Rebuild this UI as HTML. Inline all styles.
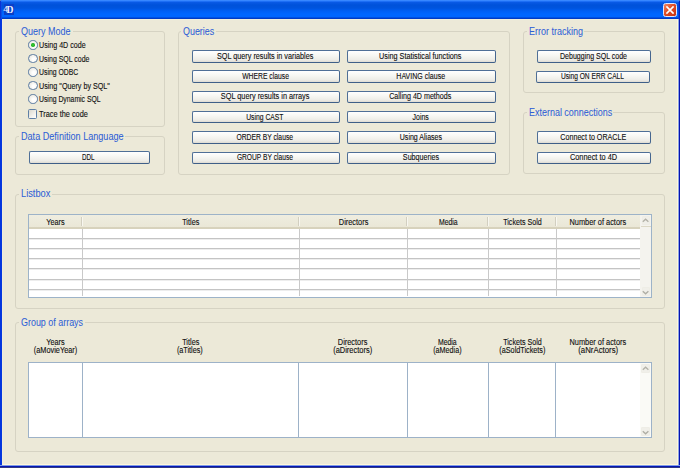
<!DOCTYPE html><html><head><meta charset="utf-8"><style>
*{box-sizing:border-box;margin:0;padding:0}
html,body{width:680px;height:468px;overflow:hidden;background:#A0977F}
body{position:relative;font-family:"Liberation Sans", sans-serif;color:#101010}
.a{position:absolute}
.t{position:absolute;white-space:nowrap;-webkit-text-stroke:0.12px currentColor}
#frame{position:absolute;left:0;top:0;width:680px;height:468px;background:linear-gradient(90deg,#0434DC 0,#0538E0 2px,#8FA6E4 2px,#8FA6E4 678px,#8FA6E4 678px,#8FA6E4 679px,#0612B0 679px);border-radius:2px 2px 0 0}
#bot{position:absolute;left:0;top:465px;width:680px;height:3px;background:linear-gradient(#7E9CEA 0,#7E9CEA 1px,#0616B4 1px,#0616B4 2px,#303A82 2px)}
#title{position:absolute;left:0;top:0;width:680px;height:19px;border-radius:2px 2px 0 0;
 background:linear-gradient(#4592FF 0px,#2A7CFF 1px,#0A5AE6 2.2px,#0052DA 5px,#0054DE 8px,#005FF4 11px,#0066FF 14px,#0066FF 16.5px,#0046D4 18px,#0030B8 19px)}
#client{position:absolute;left:2px;top:19px;width:676px;height:446px;background:#ECE9D8;border-top:1px solid #F1EEDB;border-left:1px solid #F1EDDA;border-right:1px solid #FFF6DA;border-bottom:1px solid #FFF6DA}
.g{position:absolute;border:1px solid #D6D3C3;border-radius:3px}
.gb{position:absolute;background:#ECE9D8}
.b{position:absolute;border:1.2px solid #4F6F97;border-bottom-color:#3F5F88;border-right-color:#46668F;border-radius:2px;background:linear-gradient(#FFFFFF,#F7F7F3 40%,#EDECE7 80%,#DEDBD2)}
.r{position:absolute;width:9.4px;height:9.4px;border-radius:50%;border:1.4px solid #5A7BA3;background:radial-gradient(circle at 60% 60%,#FFFFFF 20%,#ECEBE5 70%,#D6D4CB)}
</style></head><body>
<div id="frame"></div><div id="bot"></div><div id="title"></div>
<div class="a" style="left:0;top:1px;width:1px;height:18px;background:#0A34D4"></div><div class="a" style="left:1px;top:2px;width:1px;height:17px;background:#0A4EE6"></div><div class="a" style="left:678px;top:2px;width:1px;height:17px;background:#0648D8"></div><div class="a" style="left:679px;top:1px;width:1px;height:18px;background:#0226C0"></div>
<div class="a" style="left:3.5px;top:4px;width:10.5px;height:10.7px;background:#0A40C8"></div>
<div class="a" style="left:6.4px;top:5.3px;font-family:'Liberation Serif',serif;font-weight:bold;font-size:9.6px;line-height:9.6px;color:#F2F4FF">D</div>
<div class="a" style="left:3.2px;top:5.4px;font-family:'Liberation Sans',sans-serif;font-weight:normal;font-size:8.5px;line-height:8.5px;color:#E8ECFF">4</div>
<div class="a" style="left:662.8px;top:3px;width:14px;height:14px;border-radius:2.5px;border:1px solid #DDE6FF;background:linear-gradient(135deg,#F08A68,#E3522A 40%,#D03C16 80%,#C23410)"></div>
<svg class="a" style="left:662.8px;top:3px" width="14" height="14"><path d="M3.4 3.4L10.6 10.6M10.6 3.4L3.4 10.6" stroke="#fff" stroke-width="1.6"/></svg>
<div id="client"></div>
<div class="g" style="left:15px;top:31px;width:150px;height:96px"></div>
<div class="gb" style="left:19.2px;top:30px;width:53.4px;height:3px"></div>
<div class="t" style="left:21.20px;top:26.64px;font-size:10px;line-height:10px;color:#2F5FD6;transform:scaleX(0.898);transform-origin:0 0;-webkit-text-stroke:0.05px #2F5FD6;">Query Mode</div>
<div class="g" style="left:15px;top:136px;width:150px;height:39px"></div>
<div class="gb" style="left:19px;top:135px;width:105.8px;height:3px"></div>
<div class="t" style="left:21.00px;top:131.63px;font-size:10px;line-height:10px;color:#2F5FD6;transform:scaleX(0.909);transform-origin:0 0;-webkit-text-stroke:0.05px #2F5FD6;">Data Definition Language</div>
<div class="g" style="left:178px;top:31px;width:332px;height:144px"></div>
<div class="gb" style="left:181.2px;top:30px;width:35.2px;height:3px"></div>
<div class="t" style="left:183.20px;top:26.64px;font-size:10px;line-height:10px;color:#2F5FD6;transform:scaleX(0.891);transform-origin:0 0;-webkit-text-stroke:0.05px #2F5FD6;">Queries</div>
<div class="g" style="left:523px;top:31px;width:142px;height:62px"></div>
<div class="gb" style="left:526.5px;top:30px;width:57px;height:3px"></div>
<div class="t" style="left:528.50px;top:26.64px;font-size:10px;line-height:10px;color:#2F5FD6;transform:scaleX(0.898);transform-origin:0 0;-webkit-text-stroke:0.05px #2F5FD6;">Error tracking</div>
<div class="g" style="left:523px;top:112px;width:142px;height:62px"></div>
<div class="gb" style="left:526.5px;top:111px;width:86.8px;height:3px"></div>
<div class="t" style="left:528.50px;top:108.13px;font-size:10px;line-height:10px;color:#2F5FD6;transform:scaleX(0.896);transform-origin:0 0;-webkit-text-stroke:0.05px #2F5FD6;">External connections</div>
<div class="g" style="left:15px;top:194px;width:650px;height:115px"></div>
<div class="gb" style="left:19px;top:193px;width:32.7px;height:3px"></div>
<div class="t" style="left:21.00px;top:189.13px;font-size:10px;line-height:10px;color:#2F5FD6;transform:scaleX(0.926);transform-origin:0 0;-webkit-text-stroke:0.05px #2F5FD6;">Listbox</div>
<div class="g" style="left:15px;top:322px;width:650px;height:130px"></div>
<div class="gb" style="left:19.2px;top:321px;width:65.6px;height:3px"></div>
<div class="t" style="left:21.20px;top:317.64px;font-size:10px;line-height:10px;color:#2F5FD6;transform:scaleX(0.893);transform-origin:0 0;-webkit-text-stroke:0.05px #2F5FD6;">Group of arrays</div>
<div class="r" style="left:28.2px;top:40.3px"></div>
<div class="a" style="left:31.2px;top:43.3px;width:3.4px;height:3.4px;border-radius:50%;background:radial-gradient(circle,#30C030 40%,#1E951E)"></div>
<div class="t" style="left:39.00px;top:41.47px;font-size:8.3px;line-height:8.3px;transform:scaleX(0.856);transform-origin:0 0;">Using 4D code</div>
<div class="r" style="left:28.2px;top:53.8px"></div>
<div class="t" style="left:39.00px;top:54.97px;font-size:8.3px;line-height:8.3px;transform:scaleX(0.838);transform-origin:0 0;">Using SQL code</div>
<div class="r" style="left:28.2px;top:67.3px"></div>
<div class="t" style="left:39.00px;top:68.47px;font-size:8.3px;line-height:8.3px;transform:scaleX(0.826);transform-origin:0 0;">Using ODBC</div>
<div class="r" style="left:28.2px;top:80.8px"></div>
<div class="t" style="left:39.00px;top:81.97px;font-size:8.3px;line-height:8.3px;transform:scaleX(0.865);transform-origin:0 0;">Using "Query by SQL"</div>
<div class="r" style="left:28.2px;top:94.3px"></div>
<div class="t" style="left:39.00px;top:95.47px;font-size:8.3px;line-height:8.3px;transform:scaleX(0.825);transform-origin:0 0;">Using Dynamic SQL</div>
<div class="a" style="left:28px;top:109px;width:9.3px;height:9.7px;border:1.3px solid #5F80A6;border-radius:1.5px;background:linear-gradient(135deg,#DAD8CE,#F2F1EC 60%,#FFFFFF)"></div>
<div class="t" style="left:39.00px;top:110.47px;font-size:8.3px;line-height:8.3px;transform:scaleX(0.889);transform-origin:0 0;">Trace the code</div>
<div class="b" style="left:28.7px;top:151px;width:120.99999999999999px;height:12.6px"></div>
<div class="t" style="left:27.90px;top:152.67px;width:121.00px;text-align:center;font-size:8.3px;line-height:8.3px;"><span style="display:inline-block;transform:scaleX(0.759)">DDL</span></div>
<div class="b" style="left:192px;top:50.0px;width:147.8px;height:12.6px"></div>
<div class="t" style="left:191.20px;top:51.67px;width:147.80px;text-align:center;font-size:8.3px;line-height:8.3px;"><span style="display:inline-block;transform:scaleX(0.873)">SQL query results in variables</span></div>
<div class="b" style="left:347.2px;top:50.0px;width:148.60000000000002px;height:12.6px"></div>
<div class="t" style="left:346.40px;top:51.67px;width:148.60px;text-align:center;font-size:8.3px;line-height:8.3px;"><span style="display:inline-block;transform:scaleX(0.872)">Using Statistical functions</span></div>
<div class="b" style="left:192px;top:70.3px;width:147.8px;height:12.6px"></div>
<div class="t" style="left:191.20px;top:71.97px;width:147.80px;text-align:center;font-size:8.3px;line-height:8.3px;"><span style="display:inline-block;transform:scaleX(0.818)">WHERE clause</span></div>
<div class="b" style="left:347.2px;top:70.3px;width:148.60000000000002px;height:12.6px"></div>
<div class="t" style="left:346.40px;top:71.97px;width:148.60px;text-align:center;font-size:8.3px;line-height:8.3px;"><span style="display:inline-block;transform:scaleX(0.849)">HAVING clause</span></div>
<div class="b" style="left:192px;top:90.6px;width:147.8px;height:12.6px"></div>
<div class="t" style="left:191.20px;top:92.27px;width:147.80px;text-align:center;font-size:8.3px;line-height:8.3px;"><span style="display:inline-block;transform:scaleX(0.884)">SQL query results in arrays</span></div>
<div class="b" style="left:347.2px;top:90.6px;width:148.60000000000002px;height:12.6px"></div>
<div class="t" style="left:346.40px;top:92.27px;width:148.60px;text-align:center;font-size:8.3px;line-height:8.3px;"><span style="display:inline-block;transform:scaleX(0.858)">Calling 4D methods</span></div>
<div class="b" style="left:192px;top:110.9px;width:147.8px;height:12.6px"></div>
<div class="t" style="left:191.20px;top:112.57px;width:147.80px;text-align:center;font-size:8.3px;line-height:8.3px;"><span style="display:inline-block;transform:scaleX(0.815)">Using CAST</span></div>
<div class="b" style="left:347.2px;top:110.9px;width:148.60000000000002px;height:12.6px"></div>
<div class="t" style="left:346.40px;top:112.57px;width:148.60px;text-align:center;font-size:8.3px;line-height:8.3px;"><span style="display:inline-block;transform:scaleX(0.837)">Joins</span></div>
<div class="b" style="left:192px;top:131.2px;width:147.8px;height:12.6px"></div>
<div class="t" style="left:191.20px;top:132.87px;width:147.80px;text-align:center;font-size:8.3px;line-height:8.3px;"><span style="display:inline-block;transform:scaleX(0.814)">ORDER BY clause</span></div>
<div class="b" style="left:347.2px;top:131.2px;width:148.60000000000002px;height:12.6px"></div>
<div class="t" style="left:346.40px;top:132.87px;width:148.60px;text-align:center;font-size:8.3px;line-height:8.3px;"><span style="display:inline-block;transform:scaleX(0.848)">Using Aliases</span></div>
<div class="b" style="left:192px;top:151.5px;width:147.8px;height:12.6px"></div>
<div class="t" style="left:191.20px;top:153.17px;width:147.80px;text-align:center;font-size:8.3px;line-height:8.3px;"><span style="display:inline-block;transform:scaleX(0.803)">GROUP BY clause</span></div>
<div class="b" style="left:347.2px;top:151.5px;width:148.60000000000002px;height:12.6px"></div>
<div class="t" style="left:346.40px;top:153.17px;width:148.60px;text-align:center;font-size:8.3px;line-height:8.3px;"><span style="display:inline-block;transform:scaleX(0.864)">Subqueries</span></div>
<div class="b" style="left:537.4px;top:50px;width:113.20000000000005px;height:12.6px"></div>
<div class="t" style="left:536.60px;top:51.67px;width:113.20px;text-align:center;font-size:8.3px;line-height:8.3px;"><span style="display:inline-block;transform:scaleX(0.847)">Debugging SQL code</span></div>
<div class="b" style="left:536.4px;top:70.5px;width:113.80000000000007px;height:12.6px"></div>
<div class="t" style="left:535.60px;top:72.17px;width:113.80px;text-align:center;font-size:8.3px;line-height:8.3px;"><span style="display:inline-block;transform:scaleX(0.8)">Using ON ERR CALL</span></div>
<div class="b" style="left:537.4px;top:131px;width:113.20000000000005px;height:12.6px"></div>
<div class="t" style="left:536.60px;top:132.67px;width:113.20px;text-align:center;font-size:8.3px;line-height:8.3px;"><span style="display:inline-block;transform:scaleX(0.861)">Connect to ORACLE</span></div>
<div class="b" style="left:537.4px;top:151.5px;width:113.20000000000005px;height:12.6px"></div>
<div class="t" style="left:536.60px;top:153.17px;width:113.20px;text-align:center;font-size:8.3px;line-height:8.3px;"><span style="display:inline-block;transform:scaleX(0.889)">Connect to 4D</span></div>
<div class="a" style="left:28px;top:214px;width:624px;height:83.5px;background:#fff;border:1px solid #9DB3C8;box-shadow:inset 0 1px 0 #C6D2DC,inset -1px 0 0 #C6D2DC"></div>
<div class="a" style="left:29px;top:215.3px;width:611px;height:13.299999999999994px;background:linear-gradient(#EFEDE0,#EAE7D7);border-bottom:2px solid #D7D2BC"></div>
<div class="t" style="left:28.00px;top:217.87px;width:54.80px;text-align:center;font-size:8.3px;line-height:8.3px;"><span style="display:inline-block;transform:scaleX(0.881)">Years</span></div>
<div class="t" style="left:82.80px;top:217.87px;width:216.40px;text-align:center;font-size:8.3px;line-height:8.3px;"><span style="display:inline-block;transform:scaleX(0.879)">Titles</span></div>
<div class="t" style="left:299.20px;top:217.87px;width:108.20px;text-align:center;font-size:8.3px;line-height:8.3px;"><span style="display:inline-block;transform:scaleX(0.891)">Directors</span></div>
<div class="t" style="left:407.40px;top:217.87px;width:81.40px;text-align:center;font-size:8.3px;line-height:8.3px;"><span style="display:inline-block;transform:scaleX(0.83)">Media</span></div>
<div class="t" style="left:488.80px;top:217.87px;width:67.60px;text-align:center;font-size:8.3px;line-height:8.3px;"><span style="display:inline-block;transform:scaleX(0.858)">Tickets Sold</span></div>
<div class="t" style="left:556.40px;top:217.87px;width:83.60px;text-align:center;font-size:8.3px;line-height:8.3px;"><span style="display:inline-block;transform:scaleX(0.891)">Number of actors</span></div>
<div class="a" style="left:29px;top:239px;width:611px;height:1px;background:#EDEDED"></div>
<div class="a" style="left:29px;top:238px;width:611px;height:1px;background:#C4C4C4"></div>
<div class="a" style="left:29px;top:249px;width:611px;height:1px;background:#EDEDED"></div>
<div class="a" style="left:29px;top:248px;width:611px;height:1px;background:#C4C4C4"></div>
<div class="a" style="left:29px;top:259px;width:611px;height:1px;background:#EDEDED"></div>
<div class="a" style="left:29px;top:258px;width:611px;height:1px;background:#C4C4C4"></div>
<div class="a" style="left:29px;top:269px;width:611px;height:1px;background:#EDEDED"></div>
<div class="a" style="left:29px;top:268px;width:611px;height:1px;background:#C4C4C4"></div>
<div class="a" style="left:29px;top:280px;width:611px;height:1px;background:#EDEDED"></div>
<div class="a" style="left:29px;top:279px;width:611px;height:1px;background:#C4C4C4"></div>
<div class="a" style="left:29px;top:290px;width:611px;height:1px;background:#EDEDED"></div>
<div class="a" style="left:29px;top:289px;width:611px;height:1px;background:#C4C4C4"></div>
<div class="a" style="left:81.2px;top:216.5px;width:1px;height:9.5px;background:#D2CFC0"></div>
<div class="a" style="left:82.2px;top:216.5px;width:1px;height:9.5px;background:#F8F7F0"></div>
<div class="a" style="left:82.3px;top:228.6px;width:1.2px;height:67.6px;background:#C9C9C9"></div>
<div class="a" style="left:297.59999999999997px;top:216.5px;width:1px;height:9.5px;background:#D2CFC0"></div>
<div class="a" style="left:298.59999999999997px;top:216.5px;width:1px;height:9.5px;background:#F8F7F0"></div>
<div class="a" style="left:298.7px;top:228.6px;width:1.2px;height:67.6px;background:#C9C9C9"></div>
<div class="a" style="left:405.79999999999995px;top:216.5px;width:1px;height:9.5px;background:#D2CFC0"></div>
<div class="a" style="left:406.79999999999995px;top:216.5px;width:1px;height:9.5px;background:#F8F7F0"></div>
<div class="a" style="left:406.9px;top:228.6px;width:1.2px;height:67.6px;background:#C9C9C9"></div>
<div class="a" style="left:487.2px;top:216.5px;width:1px;height:9.5px;background:#D2CFC0"></div>
<div class="a" style="left:488.2px;top:216.5px;width:1px;height:9.5px;background:#F8F7F0"></div>
<div class="a" style="left:488.3px;top:228.6px;width:1.2px;height:67.6px;background:#C9C9C9"></div>
<div class="a" style="left:554.8px;top:216.5px;width:1px;height:9.5px;background:#D2CFC0"></div>
<div class="a" style="left:555.8px;top:216.5px;width:1px;height:9.5px;background:#F8F7F0"></div>
<div class="a" style="left:555.9px;top:228.6px;width:1.2px;height:67.6px;background:#C9C9C9"></div>
<div class="a" style="left:640px;top:215px;width:11px;height:82px;background:#F4F3EE"></div>
<div class="a" style="left:641.5px;top:216px;width:8.5px;height:9px;background:#F0EFE9;border:1px solid #EEEDE6;border-radius:1px"></div>
<svg class="a" style="left:640px;top:215px" width="11" height="11"><path d="M2.8 6.8L5.6 4.2L8.4 6.8" fill="none" stroke="#B2B1A8" stroke-width="1.3"/></svg>
<div class="a" style="left:641px;top:226px;width:9.5px;height:1px;background:#DCD8C6"></div>
<div class="a" style="left:641.5px;top:287px;width:8.5px;height:9px;background:#F0EFE9;border:1px solid #EEEDE6;border-radius:1px"></div>
<svg class="a" style="left:640px;top:286px" width="11" height="11"><path d="M2.8 5.2L5.6 7.8L8.4 5.2" fill="none" stroke="#AEADA4" stroke-width="1.3"/></svg>
<div class="t" style="left:28.00px;top:337.57px;width:54.10px;text-align:center;font-size:8.3px;line-height:8.3px;"><span style="display:inline-block;transform:scaleX(0.881)">Years</span></div>
<div class="t" style="left:28.00px;top:346.17px;width:54.10px;text-align:center;font-size:8.3px;line-height:8.3px;"><span style="display:inline-block;transform:scaleX(0.886)">(aMovieYear)</span></div>
<div class="t" style="left:82.10px;top:337.57px;width:216.40px;text-align:center;font-size:8.3px;line-height:8.3px;"><span style="display:inline-block;transform:scaleX(0.879)">Titles</span></div>
<div class="t" style="left:82.10px;top:346.17px;width:216.40px;text-align:center;font-size:8.3px;line-height:8.3px;"><span style="display:inline-block;transform:scaleX(0.873)">(aTitles)</span></div>
<div class="t" style="left:298.50px;top:337.57px;width:108.50px;text-align:center;font-size:8.3px;line-height:8.3px;"><span style="display:inline-block;transform:scaleX(0.891)">Directors</span></div>
<div class="t" style="left:298.50px;top:346.17px;width:108.50px;text-align:center;font-size:8.3px;line-height:8.3px;"><span style="display:inline-block;transform:scaleX(0.9)">(aDirectors)</span></div>
<div class="t" style="left:407.00px;top:337.57px;width:81.30px;text-align:center;font-size:8.3px;line-height:8.3px;"><span style="display:inline-block;transform:scaleX(0.83)">Media</span></div>
<div class="t" style="left:407.00px;top:346.17px;width:81.30px;text-align:center;font-size:8.3px;line-height:8.3px;"><span style="display:inline-block;transform:scaleX(0.864)">(aMedia)</span></div>
<div class="t" style="left:488.30px;top:337.57px;width:67.30px;text-align:center;font-size:8.3px;line-height:8.3px;"><span style="display:inline-block;transform:scaleX(0.858)">Tickets Sold</span></div>
<div class="t" style="left:488.30px;top:346.17px;width:67.30px;text-align:center;font-size:8.3px;line-height:8.3px;"><span style="display:inline-block;transform:scaleX(0.874)">(aSoldTickets)</span></div>
<div class="t" style="left:555.60px;top:337.57px;width:84.40px;text-align:center;font-size:8.3px;line-height:8.3px;"><span style="display:inline-block;transform:scaleX(0.891)">Number of actors</span></div>
<div class="t" style="left:555.60px;top:346.17px;width:84.40px;text-align:center;font-size:8.3px;line-height:8.3px;"><span style="display:inline-block;transform:scaleX(0.94)">(aNrActors)</span></div>
<div class="a" style="left:28px;top:362px;width:624px;height:76px;background:#fff;border:1.3px solid #9DB2C8"></div>
<div class="a" style="left:82px;top:362px;width:1px;height:76px;background:#9DB2C8"></div>
<div class="a" style="left:298px;top:362px;width:1px;height:76px;background:#9DB2C8"></div>
<div class="a" style="left:407px;top:362px;width:1px;height:76px;background:#9DB2C8"></div>
<div class="a" style="left:488px;top:362px;width:1px;height:76px;background:#9DB2C8"></div>
<div class="a" style="left:555px;top:362px;width:1px;height:76px;background:#9DB2C8"></div>
<div class="a" style="left:639.5px;top:363px;width:11.0px;height:74px;background:#FAFAF6"></div>
<div class="a" style="left:641.0px;top:364px;width:8.5px;height:9px;background:#F0EFE9;border:1px solid #EEEDE6;border-radius:1px"></div>
<svg class="a" style="left:639.5px;top:363px" width="11.0" height="11"><path d="M2.8 6.8L5.6 4.2L8.4 6.8" fill="none" stroke="#B2B1A8" stroke-width="1.3"/></svg>
<div class="a" style="left:641.0px;top:427px;width:8.5px;height:9px;background:#F0EFE9;border:1px solid #EEEDE6;border-radius:1px"></div>
<svg class="a" style="left:639.5px;top:426px" width="11.0" height="11"><path d="M2.8 5.2L5.6 7.8L8.4 5.2" fill="none" stroke="#AEADA4" stroke-width="1.3"/></svg>
</body></html>
